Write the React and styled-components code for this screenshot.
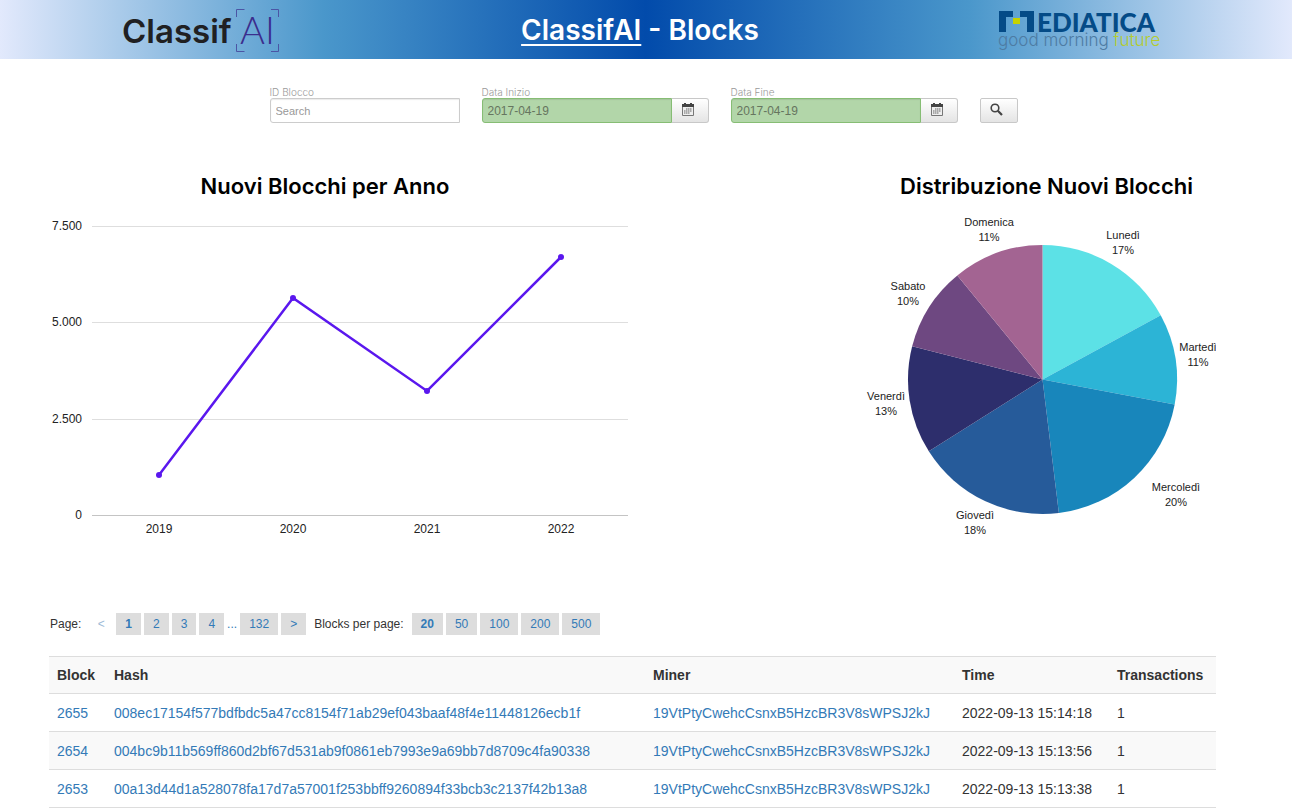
import React from "react";
import styled, { createGlobalStyle } from "styled-components";

const sans = '"Liberation Sans", Arial, sans-serif';
const inter = 'Inter, "Liberation Sans", sans-serif';

const GlobalStyle = createGlobalStyle`
  *, *::before, *::after { box-sizing: border-box; }
  body { margin: 0; background: #fff; color: #333; font-family: ${sans}; }
`;

const Header = styled.header`
  display: flex;
  align-items: center;
  justify-content: space-between;
  height: 59px;
  padding: 0 132px 0 122px;
  background: linear-gradient(90deg, #e2e9fc 0%, #4a97cb 25%, #024bab 50%, #4a97cb 75%, #e2e9fc 100%);
`;

const Logo = styled.svg`
  display: block;
  flex: none;
  overflow: visible;
`;

const PageTitle = styled.h1`
  margin: 0;
  color: #fff;
  font: 600 28px/36px ${inter};
`;

const TitleLink = styled.a`
  color: inherit;
  text-decoration: underline;
  text-decoration-thickness: 2px;
  text-underline-offset: 4px;
  text-decoration-skip-ink: none;
`;

const Filters = styled.form`
  display: flex;
  align-items: flex-end;
  justify-content: center;
  gap: 22px;
  padding: 28px 5px 0 0;
`;

const Field = styled.div`
  width: ${(p) => (p.$date ? 227 : 190)}px;
`;

const FieldLabel = styled.label`
  display: block;
  color: #999;
  font: 300 10px/11px ${inter};
`;

const InputGroup = styled.div`
  display: flex;
`;

const TextInput = styled.input`
  flex: 1;
  min-width: 0;
  height: 25px;
  padding: 0 5px;
  border: 1px solid ${(p) => (p.$date ? "#86bd74" : "#ccc")};
  border-radius: 3px 0 0 3px;
  background: ${(p) => (p.$date ? "#b2d6a9" : "#fff")};
  box-shadow: inset 0 1px 1px rgba(0, 0, 0, 0.08);
  color: #66755f;
  font: ${(p) => (p.$date ? 12 : 11)}px ${sans};
  &::placeholder { color: #999; opacity: 1; }
`;

const IconButton = styled.button`
  display: flex;
  align-items: center;
  justify-content: center;
  width: ${(p) => (p.$attached ? 37 : 38)}px;
  height: 25px;
  padding: 0 4px 2px 0;
  border: 1px solid #c8c8c8;
  border-left-width: ${(p) => (p.$attached ? 0 : 1)}px;
  border-radius: ${(p) => (p.$attached ? "0 3px 3px 0" : "2px")};
  background: linear-gradient(#fff, #e4e4e4);
`;

const Content = styled.main`
  padding: 51px 76px 0 49px;
`;

const Charts = styled.section`
  display: grid;
  grid-template-columns: 579fr 351fr;
  column-gap: 237px;
`;

const ChartPanel = styled.figure`
  margin: 0;
`;

const ChartTitle = styled.figcaption`
  padding: ${(p) => p.$padding};
  color: #000;
  text-align: center;
  white-space: nowrap;
  font: 600 22px/24px ${inter};
`;

const Chart = styled.svg`
  display: block;
  width: 100%;
  font-family: ${sans};
  fill: #222;
`;

const Pager = styled.nav`
  display: flex;
  align-items: center;
  padding: 65px 1px 21px;
  font-size: 12px;
  line-height: 22px;
`;

const PagerLabel = styled.span`
  margin-right: 8px;
`;

const PageButtons = styled.div`
  display: flex;
  align-items: center;
  gap: 3px;
  margin-right: 8px;
`;

const PageButton = styled.button`
  height: 22px;
  min-width: 24px;
  padding: 0 ${(p) => (p.$plain ? 0 : 9)}px;
  border: 0;
  background: ${(p) => (p.$plain ? "transparent" : "#ddd")};
  color: ${(p) => (p.$plain ? "#9dbbd8" : "#337ab7")};
  font: ${(p) => (p.$current ? 700 : 400)} 12px/22px ${sans};
`;

const Ellipsis = styled.span`
  color: #337ab7;
`;

const Table = styled.table`
  width: 100%;
  table-layout: fixed;
  border-collapse: separate;
  border-spacing: 0;
  font-size: 14px;
  line-height: 20px;
`;

const Column = styled.col`
  width: ${(p) => p.$width};
`;

const Row = styled.tr`
  height: 38px;
  background: ${(p) => (p.$striped ? "#f9f9f9" : "#fff")};
`;

const HeadCell = styled.th`
  padding: 0 8px;
  border-top: 1px solid #ddd;
  border-bottom: 1px solid #ddd;
  text-align: left;
  white-space: nowrap;
`;

const Cell = styled.td`
  padding: 0 8px;
  border-bottom: 1px solid #ddd;
  white-space: nowrap;
`;

const CellLink = styled.a`
  color: #337ab7;
  text-decoration: none;
`;

function ClassifLogo() {
  return (
    <Logo width="160" height="48" viewBox="122 6 160 48" role="img" aria-label="ClassifAI">
      <text x="122" y="43" fontFamily="Inter, sans-serif" fontSize="33" fontWeight="600" fill="#202022">Classif</text>
      <text x="240" y="44" fontFamily="Lato, sans-serif" fontSize="38" fontWeight="300" fill="#3b2d8d">AI</text>
      <path d="M236.500 17V9.500H244.500 M271 9.500H278.500V17 M278.500 44V51.500H271 M244.500 51.500H236.500V44" fill="none" stroke="#4b55a5" />
    </Logo>
  );
}

function MediaticaLogo() {
  return (
    <Logo width="162" height="42" viewBox="998 10 162 42" role="img" aria-label="Mediatica good morning future">
      <path d="M999 12H1013V18H1006V33H999Z M1020 12H1034V33H1027V18H1020Z" fill="#044b87" />
      <rect x="1013" y="19" width="7" height="6" fill="#c6d300" />
      <text x="1037" y="33" fontFamily="Lato, sans-serif" fontSize="26" fontWeight="900" fill="#044b87">EDIATICA</text>
      <text x="998" y="47" fontFamily="Inter, sans-serif" fontSize="17" fontWeight="300" fill="#4d7ba3">
        good morning <tspan fill="#b5cc2c">future</tspan>
      </text>
    </Logo>
  );
}

function CalendarIcon() {
  return (
    <svg width="12" height="13" viewBox="0 0 12 13" aria-hidden="true">
      <path d="M.5 2.500H11.500V12.500H.5Z" fill="#eee" stroke="#777" />
      <path d="M0 1H2V0H4V1H8V0H10V1H12V4H0Z" fill="#444" />
      <path d="M4 6H10 M2 8H10 M2 10H8" stroke="#666" strokeDasharray="1.500 .5" />
    </svg>
  );
}

function SearchIcon() {
  return (
    <svg width="13" height="13" viewBox="0 0 13 13" aria-hidden="true">
      <circle cx="5" cy="5" r="3.800" fill="none" stroke="#444" strokeWidth="1.600" />
      <path d="M7.800 7.800L12 12" stroke="#444" strokeWidth="2.200" />
    </svg>
  );
}

function DateField({ id, label }) {
  return (
    <Field $date>
      <FieldLabel htmlFor={id}>{label}</FieldLabel>
      <InputGroup>
        <TextInput id={id} $date defaultValue="2017-04-19" />
        <IconButton type="button" $attached aria-label={`Calendario ${label}`}>
          <CalendarIcon />
        </IconButton>
      </InputGroup>
    </Field>
  );
}

const years = [
  { year: "2019", x: 159, y: 475 },
  { year: "2020", x: 293, y: 298 },
  { year: "2021", x: 427, y: 391 },
  { year: "2022", x: 561, y: 257 },
];

const ticks = [
  { label: "7.500", y: 226 },
  { label: "5.000", y: 322 },
  { label: "2.500", y: 419 },
  { label: "0", y: 515 },
];

function LineChart() {
  return (
    <Chart viewBox="49 198 579 350" role="img" aria-label="Nuovi blocchi per anno">
      {ticks.map((t) => (
        <g key={t.label}>
          <path d={`M92 ${t.y + 0.5}H628`} stroke={t.y === 515 ? "#c4c4c4" : "#dedede"} />
          <text x="82" y={t.y + 4} fontSize="12" textAnchor="end">{t.label}</text>
        </g>
      ))}
      <polyline
        points={years.map((p) => `${p.x},${p.y}`).join(" ")}
        fill="none"
        stroke="#5a17ee"
        strokeWidth="2.500"
      />
      {years.map((p) => (
        <g key={p.year}>
          <circle cx={p.x} cy={p.y} r="3" fill="#5a17ee" />
          <text x={p.x} y="533" fontSize="12" textAnchor="middle">{p.year}</text>
        </g>
      ))}
    </Chart>
  );
}

// end: clockwise angle, in degrees from the top, at which the slice stops
const slices = [
  { day: "Lunedì", share: "17%", end: 61.5, color: "#5ce1e6", x: 1123, y: 239 },
  { day: "Martedì", share: "11%", end: 100.7, color: "#2cb4d6", x: 1198, y: 351 },
  { day: "Mercoledì", share: "20%", end: 173, color: "#1886bb", x: 1176, y: 491 },
  { day: "Giovedì", share: "18%", end: 237.7, color: "#265b9a", x: 975, y: 519 },
  { day: "Venerdì", share: "13%", end: 284.3, color: "#2d2e6c", x: 886, y: 400 },
  { day: "Sabato", share: "10%", end: 320.7, color: "#6e4881", x: 908, y: 290 },
  { day: "Domenica", share: "11%", end: 360, color: "#a36492", x: 989, y: 226 },
];

const pie = { x: 1042.5, y: 379.5, r: 134.5 };

function rim(degrees) {
  const a = (degrees * Math.PI) / 180;
  return `${pie.x + pie.r * Math.sin(a)} ${pie.y - pie.r * Math.cos(a)}`;
}

function PieChart() {
  return (
    <Chart viewBox="865 198 351 350" role="img" aria-label="Distribuzione nuovi blocchi">
      {slices.map((s, i) => (
        <g key={s.day}>
          <path
            d={`M${pie.x} ${pie.y}L${rim(i ? slices[i - 1].end : 0)}A${pie.r} ${pie.r} 0 0 1 ${rim(s.end)}Z`}
            fill={s.color}
          />
          <text x={s.x} y={s.y} fontSize="11" textAnchor="middle">{s.day}</text>
          <text x={s.x} y={s.y + 15} fontSize="11" textAnchor="middle">{s.share}</text>
        </g>
      ))}
    </Chart>
  );
}

const miner = "19VtPtyCwehcCsnxB5HzcBR3V8sWPSJ2kJ";
const blocks = [
  { id: "2655", hash: "008ec17154f577bdfbdc5a47cc8154f71ab29ef043baaf48f4e11448126ecb1f", time: "2022-09-13 15:14:18" },
  { id: "2654", hash: "004bc9b11b569ff860d2bf67d531ab9f0861eb7993e9a69bb7d8709c4fa90338", time: "2022-09-13 15:13:56" },
  { id: "2653", hash: "00a13d44d1a528078fa17d7a57001f253bbff9260894f33bcb3c2137f42b13a8", time: "2022-09-13 15:13:38" },
];

const columnWidths = ["57px", "auto", "309px", "155px", "107px"];

export default function App() {
  return (
    <>
      <GlobalStyle />
      <Header>
        <ClassifLogo />
        <PageTitle>
          <TitleLink href="#">ClassifAI</TitleLink> - Blocks
        </PageTitle>
        <MediaticaLogo />
      </Header>
      <Filters>
        <Field>
          <FieldLabel htmlFor="block-id">ID Blocco</FieldLabel>
          <InputGroup>
            <TextInput id="block-id" placeholder="Search" />
          </InputGroup>
        </Field>
        <DateField id="start" label="Data Inizio" />
        <DateField id="end" label="Data Fine" />
        <IconButton type="button" aria-label="Cerca">
          <SearchIcon />
        </IconButton>
      </Filters>
      <Content>
        <Charts>
          <ChartPanel>
            <ChartTitle $padding="0 27px 0 0">Nuovi Blocchi per Anno</ChartTitle>
            <LineChart />
          </ChartPanel>
          <ChartPanel>
            <ChartTitle $padding="0 0 0 12px">Distribuzione Nuovi Blocchi</ChartTitle>
            <PieChart />
          </ChartPanel>
        </Charts>
        <Pager>
          <PagerLabel>Page:</PagerLabel>
          <PageButtons>
            <PageButton $plain>&lt;</PageButton>
            <PageButton $current>1</PageButton>
            <PageButton>2</PageButton>
            <PageButton>3</PageButton>
            <PageButton>4</PageButton>
            <Ellipsis>...</Ellipsis>
            <PageButton>132</PageButton>
            <PageButton>&gt;</PageButton>
          </PageButtons>
          <PagerLabel>Blocks per page:</PagerLabel>
          <PageButtons>
            <PageButton $current>20</PageButton>
            <PageButton>50</PageButton>
            <PageButton>100</PageButton>
            <PageButton>200</PageButton>
            <PageButton>500</PageButton>
          </PageButtons>
        </Pager>
        <Table>
          <colgroup>
            {columnWidths.map((w) => (
              <Column key={w} $width={w} />
            ))}
          </colgroup>
          <thead>
            <Row $striped>
              <HeadCell>Block</HeadCell>
              <HeadCell>Hash</HeadCell>
              <HeadCell>Miner</HeadCell>
              <HeadCell>Time</HeadCell>
              <HeadCell>Transactions</HeadCell>
            </Row>
          </thead>
          <tbody>
            {blocks.map((b, i) => (
              <Row key={b.id} $striped={i % 2 === 1}>
                <Cell><CellLink href="#">{b.id}</CellLink></Cell>
                <Cell><CellLink href="#">{b.hash}</CellLink></Cell>
                <Cell><CellLink href="#">{miner}</CellLink></Cell>
                <Cell>{b.time}</Cell>
                <Cell>1</Cell>
              </Row>
            ))}
          </tbody>
        </Table>
      </Content>
    </>
  );
}
